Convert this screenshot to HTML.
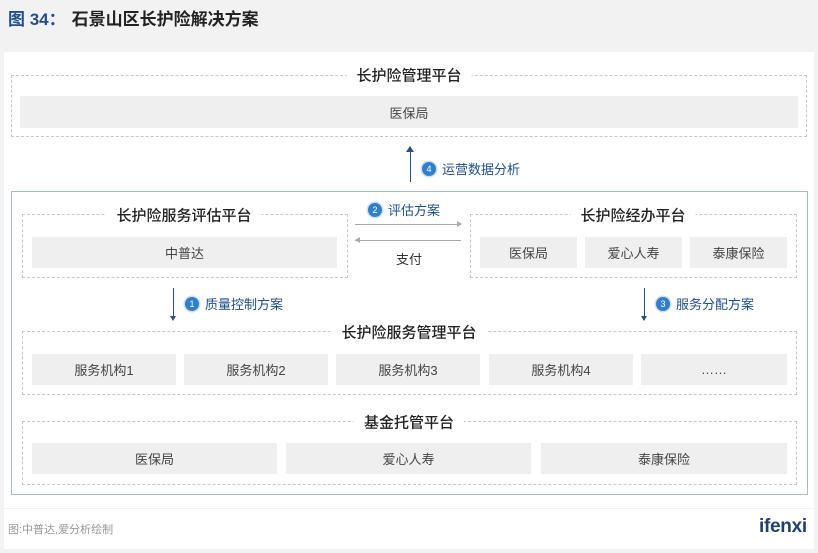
<!DOCTYPE html>
<html><head><meta charset="utf-8"><style>
*{margin:0;padding:0;box-sizing:border-box}
body{width:818px;height:553px;background:#f2f2f2;position:relative;overflow:hidden;font-family:"Liberation Sans","Noto Sans CJK SC",sans-serif;color:#333}
.a{position:absolute}
.dot{position:absolute;border:1px dashed #c8c8c8}
.g{position:absolute;background:#efefef;display:flex;align-items:center;justify-content:center;font-size:13px;color:#444}
.t{position:absolute;background:#fff;font-size:15px;color:#222;padding:0 10px;transform:translate(-50%,-50%);white-space:nowrap;font-weight:500}
.lbl{position:absolute;font-size:13px;color:#1f4e8c;display:flex;align-items:center;white-space:nowrap}
.c{width:14px;height:14px;border-radius:50%;background:#2e7fd0;color:#fff;font-size:9px;display:inline-flex;align-items:center;justify-content:center;margin-right:6px;box-shadow:0 0 0 1.5px #cfe0f2}
.vl{position:absolute;width:1px;background:#2b4f80}
</style></head><body>
<div class="a" style="left:8px;top:5px;font-size:17px;font-weight:bold;color:#1f4e8c">图 34：<span style="color:#222;margin-left:6px">石景山区长护险解决方案</span></div>
<div class="a" style="left:4px;top:52px;width:810px;height:456px;background:#fff"></div>
<div class="dot" style="left:11px;top:75px;width:796px;height:62px"></div>
<div class="t" style="left:409px;top:75px">长护险管理平台</div>
<div class="g" style="left:20px;top:96px;width:778px;height:32px">医保局</div>
<div class="vl" style="left:410px;top:150px;height:32px"></div>
<div class="a" style="left:406px;top:146px;border-left:4px solid transparent;border-right:4px solid transparent;border-bottom:6px solid #2b4f80"></div>
<div class="lbl" style="left:422px;top:159px"><span class="c">4</span>运营数据分析</div>
<div class="a" style="left:11px;top:191px;width:797px;height:304px;border:1px solid #a9b9d2"></div>
<div class="dot" style="left:22px;top:214px;width:326px;height:64px"></div>
<div class="t" style="left:184px;top:215px">长护险服务评估平台</div>
<div class="g" style="left:32px;top:237px;width:305px;height:31px">中普达</div>
<div class="lbl" style="left:368px;top:200px"><span class="c">2</span>评估方案</div>
<div class="a" style="left:355px;top:224px;width:106px;height:1px;background:#aaa"></div>
<div class="a" style="left:457px;top:221px;border-top:3px solid transparent;border-bottom:3px solid transparent;border-left:5px solid #aaa"></div>
<div class="a" style="left:355px;top:240px;width:106px;height:1px;background:#aaa"></div>
<div class="a" style="left:355px;top:237px;border-top:3px solid transparent;border-bottom:3px solid transparent;border-right:5px solid #aaa"></div>
<div class="a" style="left:396px;top:249px;font-size:13px;color:#333">支付</div>
<div class="dot" style="left:470px;top:214px;width:327px;height:64px"></div>
<div class="t" style="left:633px;top:215px">长护险经办平台</div>
<div class="g" style="left:480px;top:237px;width:97px;height:31px">医保局</div>
<div class="g" style="left:585px;top:237px;width:97px;height:31px">爱心人寿</div>
<div class="g" style="left:690px;top:237px;width:97px;height:31px">泰康保险</div>
<div class="vl" style="left:173px;top:288px;height:30px"></div>
<div class="a" style="left:170px;top:316px;border-left:3.5px solid transparent;border-right:3.5px solid transparent;border-top:5px solid #2b4f80"></div>
<div class="lbl" style="left:185px;top:294px"><span class="c">1</span>质量控制方案</div>
<div class="vl" style="left:644px;top:288px;height:30px"></div>
<div class="a" style="left:641px;top:316px;border-left:3.5px solid transparent;border-right:3.5px solid transparent;border-top:5px solid #2b4f80"></div>
<div class="lbl" style="left:656px;top:294px"><span class="c">3</span>服务分配方案</div>
<div class="dot" style="left:22px;top:331px;width:775px;height:64px"></div>
<div class="t" style="left:409px;top:332px">长护险服务管理平台</div>
<div class="g" style="left:32px;top:354px;width:144px;height:31px">服务机构1</div>
<div class="g" style="left:184px;top:354px;width:144px;height:31px">服务机构2</div>
<div class="g" style="left:336px;top:354px;width:144px;height:31px">服务机构3</div>
<div class="g" style="left:489px;top:354px;width:144px;height:31px">服务机构4</div>
<div class="g" style="left:641px;top:354px;width:146px;height:31px">……</div>
<div class="dot" style="left:22px;top:421px;width:775px;height:64px"></div>
<div class="t" style="left:409px;top:422px">基金托管平台</div>
<div class="g" style="left:32px;top:443px;width:245px;height:31px">医保局</div>
<div class="g" style="left:286px;top:443px;width:245px;height:31px">爱心人寿</div>
<div class="g" style="left:541px;top:443px;width:246px;height:31px">泰康保险</div>
<div class="a" style="left:4px;top:509px;width:810px;height:40px;background:#fff"></div>
<div class="a" style="left:8px;top:521px;font-size:11px;color:#999">图:中普达,爱分析绘制</div>
<div class="a" style="left:759px;top:516px;font-size:19px;font-weight:bold;color:#1f3f74;letter-spacing:-0.3px">ifenxi</div>
</body></html>
